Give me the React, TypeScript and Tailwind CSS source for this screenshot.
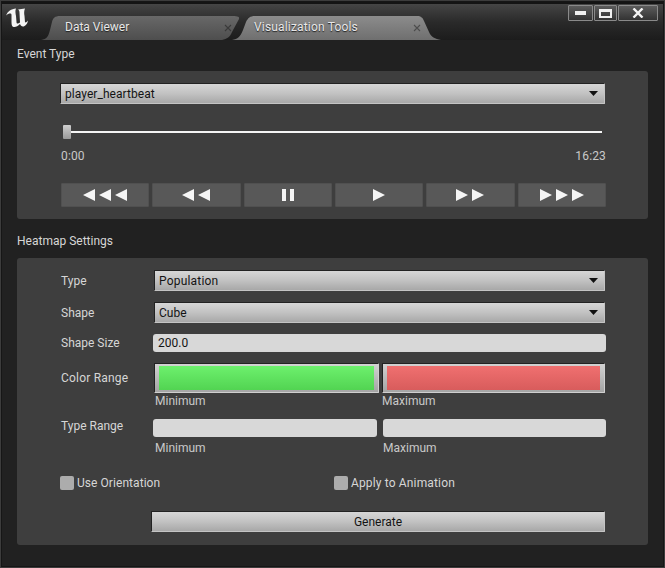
import React from "react";

const font = { fontFamily: "Roboto, 'Liberation Sans', sans-serif" };

function Tab({ label, active, first }: { label: string; active?: boolean; first?: boolean }) {
  return (
    <div className={`relative flex h-[24px] items-center pb-[2px] ${first ? "w-[200px]" : "-ml-[9px] w-[209px]"}`}>
      <svg className="absolute inset-0" width={first ? 200 : 209} height={24} viewBox={first ? "0 0 200 24" : "0 0 209 24"}>
        <defs>
          <linearGradient id={active ? "ta" : "tb"} x1="0" y1="0" x2="0" y2="1">
            <stop offset="0" stopColor={active ? "#8c8c8c" : "#686868"} />
            <stop offset="1" stopColor={active ? "#6f6f6f" : "#4e4e4e"} />
          </linearGradient>
        </defs>
        {first ? (
          <path d="M0 24 C6 23 7 21 9 14 L11 6 C12 2 14 0 19 0 L190 0 C195 0 199 0 198 3 L191 16 C189 21 186 23 181 24 Z" fill="url(#tb)" />
        ) : (
          <path d="M0 24 C6 23 8 21 11 14 L14 6 C16 2 18 0 23 0 L185 0 C189 0 191 2 192 5 L197 16 C199 21 203 23 209 24 Z" fill="url(#ta)" />
        )}
      </svg>
      <span className={`relative text-[12px] text-[#e8e8e8] [text-shadow:0_1px_1px_#222] ${first ? "ml-[24px]" : "ml-[22px] tracking-[0.17px]"}`}>{label}</span>
      <svg className={`absolute top-[8px] ${first ? "left-[183px]" : "left-[181px]"}`} width="8" height="8" viewBox="0 0 8 8">
        <path d="M1 1 L7 7 M7 1 L1 7" stroke={active ? "#4d4d4d" : "#3a3a3a"} strokeWidth="1.1" />
      </svg>
    </div>
  );
}

function WinBtn({ w, children }: { w: string; children: React.ReactNode }) {
  return (
    <div className={`flex h-[16px] items-center justify-center rounded-[1px] border border-[#8a8a8a] bg-gradient-to-b from-[#5c5c5c] to-[#333333] ${w}`}>
      {children}
    </div>
  );
}

function Dropdown({ label, track }: { label: string; track?: string }) {
  return (
    <div className="flex h-[21px] flex-1 items-center justify-between rounded-[1px] border border-t-[#222222] border-l-[#222222] border-r-[#c4c4c4] border-b-[#c4c4c4] bg-gradient-to-b from-[#d6d6d6] via-[#c2c2c2] to-[#a8a8a8] pl-[4px] pr-[6px]">
      <span className={`text-[12px] text-[#141414] ${track ?? ""}`}>{label}</span>
      <svg width="9" height="5" viewBox="0 0 9 5"><path d="M0 0 H9 L4.5 5 Z" fill="#111" /></svg>
    </div>
  );
}

function Transport({ dir, n, pause }: { dir?: "l" | "r"; n?: number; pause?: boolean }) {
  return (
    <div className="flex h-[24px] flex-1 items-center justify-center gap-[4px] rounded-[1px] border border-[#505050] bg-[#585858]">
      {pause ? (
        <svg width="12" height="12" viewBox="0 0 12 12"><path d="M0 0 H4 V12 H0 Z M8 0 H12 V12 H8 Z" fill="#f5f5f5" /></svg>
      ) : (
        Array.from({ length: n ?? 1 }).map((_, i) => (
          <svg key={i} width="12" height="12" viewBox="0 0 12 12">
            <path d={dir === "l" ? "M12 0 V12 L0 6 Z" : "M0 0 V12 L12 6 Z"} fill="#f5f5f5" />
          </svg>
        ))
      )}
    </div>
  );
}

function Input({ value, className }: { value?: string; className?: string }) {
  return (
    <div className={`flex h-[18px] items-center rounded-[3px] bg-[#d8d8d8] pl-[5px] text-[12px] text-[#141414] ${className ?? ""}`}>
      {value}
    </div>
  );
}

function Swatch({ from, to, className }: { from: string; to: string; className: string }) {
  return (
    <div className={`h-[30px] rounded-[1px] border border-t-[#222222] border-l-[#222222] border-r-[#cfcfcf] border-b-[#cfcfcf] bg-gradient-to-b from-[#d2d2d2] to-[#a4a4a4] px-[4px] pt-[2px] pb-[2px] ${className}`}>
      <div className={`h-full bg-gradient-to-b ${from} ${to}`} />
    </div>
  );
}

function RowLabel({ children, track }: { children: React.ReactNode; track?: string }) {
  return <div className={`w-[92px] shrink-0 text-[12px] leading-[14px] text-[#d6d6d6] ${track ?? ""}`}>{children}</div>;
}

function Check({ label, className, track }: { label: string; className?: string; track: string }) {
  return (
    <div className={`flex items-center gap-[3px] ${className ?? ""}`}>
      <div className="h-[14px] w-[14px] rounded-[2px] bg-[#acacac]" />
      <span className={`text-[12px] text-[#d6d6d6] ${track}`}>{label}</span>
    </div>
  );
}

export default function App() {
  return (
    <div style={font} className="h-[568px] w-[665px] overflow-hidden border border-[#3c3c3c] bg-[#212121] outline outline-1 -outline-offset-2 outline-[#161616]">
      <div className="flex h-[39px] justify-between border-t-[3px] border-[#141414] bg-gradient-to-b from-[#454545] via-[#2a2a2a] to-[#1c1c1c] pl-[4px] pr-[6px]">
        <div className="flex">
          <svg width="24" height="30" viewBox="5 4 24 30">
            <path
              d="M6 15.5 C8 11 11 9 16 8.5 C15 11 15.5 13 16 16 L16.5 22 C16.5 24 18 24 20 22.5 L19.5 13 C19.5 11 19 10 18 9.5 L25 8.5 C24 11 24 13 24.5 16 L25 22 C25.5 23 27 22 28 20.5 C27.5 24 25 26.5 23 26.5 C21.5 26.5 20.5 25.5 20 24 C18 26 15.5 27.5 13.5 27 C12 26.5 11.5 25 11.5 22 L11.5 15 C11.5 13 9 13 6 15.5 Z"
              fill="#f4f4f4"
            />
          </svg>
          <div className="ml-[12px] mt-[12px] flex items-end">
            <Tab label="Data Viewer" first />
            <Tab label="Visualization Tools" active />
          </div>
        </div>
        <div className="mt-[1px] flex gap-[1px]">
          <WinBtn w="w-[25px]"><div className="h-[4px] w-[11px] bg-[#f0f0f0]" /></WinBtn>
          <WinBtn w="w-[23px]"><div className="h-[9px] w-[13px] border-x-[2px] border-b-[2px] border-t-[3px] border-[#f0f0f0]" /></WinBtn>
          <WinBtn w="w-[40px]">
            <svg width="12" height="10" viewBox="0 0 12 10"><path d="M1.5 0.5 L10.5 9.5 M10.5 0.5 L1.5 9.5" stroke="#f4f4f4" strokeWidth="2.4" /></svg>
          </WinBtn>
        </div>
      </div>

      <div className="px-[16px]">
        <div className="flex h-[31px] items-center pb-[4px] text-[12px] text-[#d6d6d6]">Event Type</div>
        <section className="h-[148px] w-[631px] rounded-[3px] bg-[#3e3e3e] pl-[43px] pr-[43px] pt-[12px]">
          <div className="flex">
            <Dropdown label="player_heartbeat" track="tracking-[0.05px]" />
          </div>
          <div className="relative mt-[21px] flex h-[14px] items-center pl-[4px] pr-[3px]">
            <div className="h-[2px] w-full bg-[#f4f4f4]" />
            <div className="absolute left-[3px] top-0 h-[14px] w-[8px] rounded-[1px] bg-gradient-to-b from-[#cfcfcf] to-[#999999]" />
          </div>
          <div className="-mr-[1px] mt-[10px] flex justify-between pl-[1px] text-[12px] leading-[14px] tracking-[0.15px] text-[#c9c9c9]">
            <span>0:00</span>
            <span>16:23</span>
          </div>
          <div className="-mr-[1px] ml-[1px] mt-[20px] flex gap-[3px]">
            <Transport dir="l" n={3} />
            <Transport dir="l" n={2} />
            <Transport pause />
            <Transport dir="r" n={1} />
            <Transport dir="r" n={2} />
            <Transport dir="r" n={3} />
          </div>
        </section>

        <div className="flex h-[39px] items-center pt-[4px] text-[12px] text-[#d6d6d6]">Heatmap Settings</div>
        <section className="h-[287px] w-[631px] rounded-[3px] bg-[#3e3e3e] pl-[44px] pr-[43px] pt-[12px]">
          <div className="flex items-center">
            <RowLabel>Type</RowLabel>
            <div className="ml-[1px] flex flex-1"><Dropdown label="Population" track="tracking-[0.2px]" /></div>
          </div>
          <div className="mt-[11px] flex items-center">
            <RowLabel>Shape</RowLabel>
            <div className="ml-[1px] flex flex-1"><Dropdown label="Cube" /></div>
          </div>
          <div className="mt-[11px] flex items-center">
            <RowLabel>Shape Size</RowLabel>
            <Input value="200.0" className="-mr-[1px] flex-1" />
          </div>
          <div className="mt-[11px] flex">
            <div className="pt-[8px]"><RowLabel track="tracking-[0.2px]">Color Range</RowLabel></div>
            <div className="ml-[1px] flex-1">
              <div className="flex gap-[3px]">
                <Swatch from="from-[#6df06d]" to="to-[#52d452]" className="w-[225px]" />
                <Swatch from="from-[#f07070]" to="to-[#d85c5c]" className="flex-1" />
              </div>
              <div className="mt-[1px] flex gap-[3px] text-[12px] leading-[14px] text-[#c9c9c9]">
                <span className="w-[225px] pl-[1px]">Minimum</span>
                <span>Maximum</span>
              </div>
            </div>
          </div>
          <div className="mt-[11px] flex">
            <RowLabel>Type Range</RowLabel>
            <div className="-mr-[1px] flex-1">
              <div className="flex gap-[6px]">
                <Input className="w-[224px]" />
                <Input className="flex-1" />
              </div>
              <div className="mt-[4px] flex gap-[6px] text-[12px] leading-[14px] text-[#c9c9c9]">
                <span className="w-[224px] pl-[2px]">Minimum</span>
                <span>Maximum</span>
              </div>
            </div>
          </div>
          <div className="mt-[19px] flex">
            <Check label="Use Orientation" track="tracking-[0.06px]" className="-ml-[1px] w-[274px]" />
            <Check label="Apply to Animation" track="tracking-[0.15px]" />
          </div>
          <div className="ml-[90px] mt-[19px] flex h-[21px] items-center justify-center rounded-[1px] border border-t-[#222222] border-l-[#222222] border-r-[#c4c4c4] border-b-[#c4c4c4] bg-gradient-to-b from-[#d6d6d6] via-[#c2c2c2] to-[#a8a8a8] text-[12px] text-[#141414]">
            Generate
          </div>
        </section>
      </div>
    </div>
  );
}
